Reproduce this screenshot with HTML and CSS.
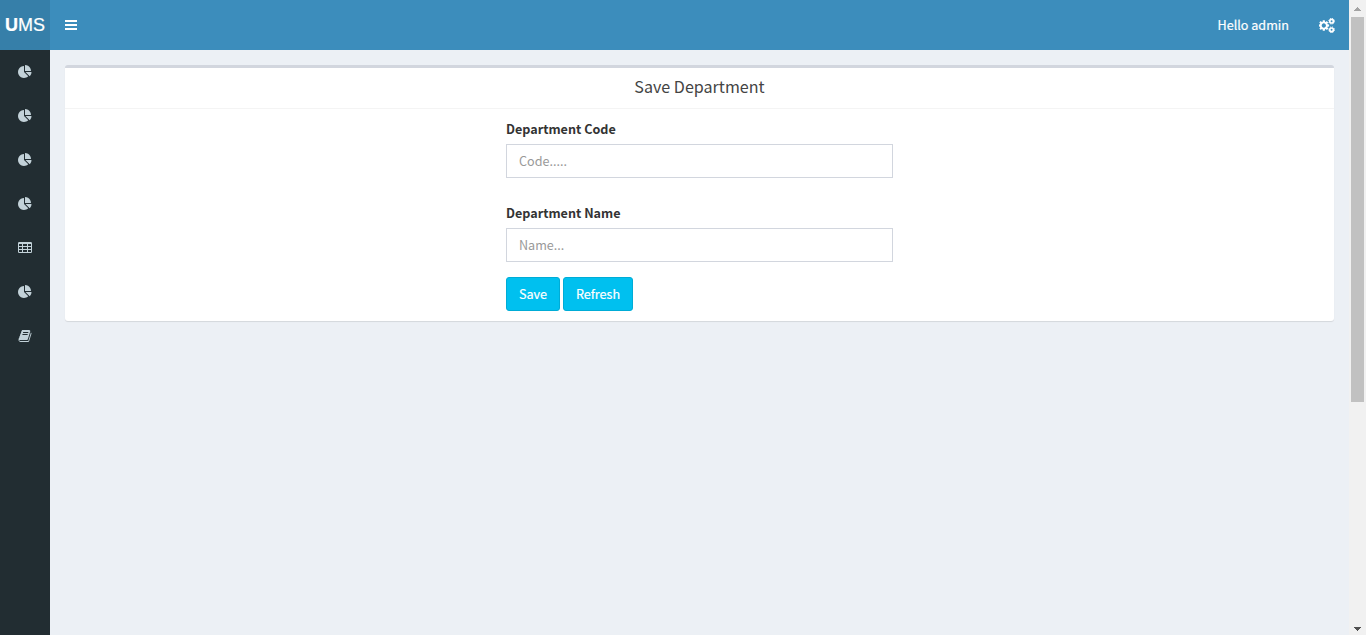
FILE: index.html
```html
<!DOCTYPE html>
<html lang="en">
<head>
<meta charset="utf-8">
<title>Save Department</title>
<link rel="stylesheet" href="styles.css">
</head>
<body>
<svg class="defs" aria-hidden="true">
  <symbol id="pie" viewBox="0 0 1792 1792"><path d="M768 890l546 546q-106 108-247.500 168t-298.500 60q-209 0-385.500-103t-279.500-279.500-103-385.500 103-385.500 279.500-279.500 385.500-103v762zM955 896h773q0 157-60 298.500t-168 247.500zM1664 768h-768v-768q209 0 385.500 103t279.500 279.500 103 385.500z"/></symbol>
  <symbol id="table" viewBox="0 0 14 14"><path fill-rule="evenodd" d="M1.200 1h11.600q1.200 0 1.200 1.200v8.600q0 1.200-1.200 1.200H1.200Q0 12 0 10.800v-8.600Q0 1 1.200 1zM1 3v2h3v-2zM5 3v2h4v-2zM10 3v2h3v-2zM1 6v2h3v-2zM5 6v2h4v-2zM10 6v2h3v-2zM1 9v2h3v-2zM5 9v2h4v-2zM10 9v2h3v-2z"/></symbol>
  <symbol id="book" viewBox="0 0 1792 1792"><path d="M1703 478q40 57 18 129l-275 906q-19 64-76.500 107.500t-122.500 43.500h-923q-77 0-148.500-53.500t-99.500-131.500q-24-67-2-127 0-4 3-27t4-37q1-8-3-21.500t-3-19.500q2-11 8-21t16.500-23.500 16.500-23.500q23-38 45-91.500t30-91.500q3-10 .5-30t-.5-28q3-11 17-28t17-23q21-36 42-92t25-90q1-9-2.500-32t.5-28q4-13 22-30.500t22-22.500q19-26 42.500-84.500t27.500-96.500q1-8-3-25.500t-2-26.500q2-8 9-18t18-23 17-21q8-12 16.500-30.500t15-35 16-36 19.500-32 26.500-23.500 36-11.500 47.500 5.500l-1 3q38-9 51-9h761q74 0 114 56t18 130l-274 906q-36 119-71.500 153.500t-128.500 34.500h-869q-27 0-38 15-11 16-1 43 24 70 144 70h923q29 0 56-15.500t35-41.500l300-987q7-22 5-57 38 15 59 43zm-1064 2q-4 13 2 22.500t20 9.500h608q13 0 25.500-9.500t16.500-22.500l21-64q4-13-2-22.500t-20-9.500h-608q-13 0-25.500 9.500t-16.500 22.500zm-83 256q-4 13 2 22.500t20 9.500h608q13 0 25.500-9.500t16.500-22.500l21-64q4-13-2-22.500t-20-9.500h-608q-13 0-25.500 9.500t-16.500 22.500z"/></symbol>
</svg>
<div class="app">
  <aside class="sidebar">
    <a class="logo"><b>U</b>MS</a>
    <nav class="menu">
      <a class="item"><svg class="icon"><use href="#pie"/></svg></a>
      <a class="item"><svg class="icon"><use href="#pie"/></svg></a>
      <a class="item"><svg class="icon"><use href="#pie"/></svg></a>
      <a class="item"><svg class="icon"><use href="#pie"/></svg></a>
      <a class="item"><svg class="icon"><use href="#table"/></svg></a>
      <a class="item"><svg class="icon"><use href="#pie"/></svg></a>
      <a class="item"><svg class="icon"><use href="#book"/></svg></a>
    </nav>
  </aside>
  <div class="main">
    <header class="navbar">
      <svg class="bars" viewBox="0 0 12 10"><path d="M0 0h12v2H0zM0 4h12v2H0zM0 8h12v2H0z"/></svg>
      <span class="hello">Hello admin</span>
      <svg class="cogs" viewBox="0 0 1920 1792"><path d="M832 896q0-106-75-181t-181-75-181 75-75 181 75 181 181 75 181-75 75-181zm384-91v185q0 10-7 19.500t-16 10.500l-155 24q-11 35-32 76 34 48 90 115 7 11 7 20 0 12-7 19-23 30-82.500 89.500t-78.500 59.500q-11 0-21-7l-115-90q-37 19-77 31-11 108-23 155-7 24-30 24h-186q-11 0-20-7.500t-10-17.500l-23-153q-34-10-75-31l-118 89q-7 7-20 7-11 0-21-8-144-133-144-160 0-9 7-19 10-14 41-53t47-61q-23-44-35-82l-152-24q-10-1-17-9.500t-7-19.500v-185q0-10 7-19.500t16-10.500l155-24q11-35 32-76-34-48-90-115-7-11-7-20 0-12 7-20 22-30 82-89t79-59q11 0 21 7l115 90q34-18 77-32 11-108 23-154 7-24 30-24h186q11 0 20 7.500t10 17.500l23 153q34 10 75 31l118-89q8-7 20-7 11 0 21 8 144 133 144 160 0 8-7 19-12 16-42 54t-45 60q23 48 34 82l152 23q10 2 17 10.500t7 19.500z"/><g class="small-cogs"><circle cx="1510" cy="384" r="215"/><circle cx="1510" cy="1408" r="215"/><g class="teeth"><circle cx="1510" cy="384" r="340"/><circle cx="1510" cy="1408" r="340"/></g></g></svg>
    </header>
    <main class="content">
      <section class="box">
        <h3 class="box-title">Save Department</h3>
        <form class="form">
          <label class="label" for="code">Department Code</label>
          <input class="input" id="code" type="text" placeholder="Code.....">
          <label class="label second" for="name">Department Name</label>
          <input class="input" id="name" type="text" placeholder="Name...">
          <div class="actions">
            <button class="btn save" type="button">Save</button>
            <button class="btn refresh" type="button">Refresh</button>
          </div>
        </form>
      </section>
    </main>
  </div>
  <div class="scrollbar">
    <svg class="arrow up" viewBox="0 0 7 4"><path d="M3 0h1v1h1v1h1v1h1v1H0V3h1V2h1V1h1z"/></svg>
    <div class="thumb"></div>
    <svg class="arrow down" viewBox="0 0 7 4"><path d="M0 0h7v1H6v1H5v1H4v1H3V3H2V2H1V1H0z"/></svg>
  </div>
</div>
</body>
</html>
```

FILE: styles.css
```css
* { box-sizing: border-box; }
body {
  margin: 0;
  overflow: hidden;
  color: #333;
  font: 12.6px/20px "Noto Sans CJK JP", "Noto Sans CJK SC", "Noto Sans", sans-serif;
}
.defs { display: none; }
.app { display: flex; height: 635px; }
.sidebar { width: 50px; background: #222d32; }
.logo {
  display: block;
  height: 50px;
  background: #367fa9;
  color: #fff;
  font: 18px/50px "Liberation Sans", Arial, sans-serif;
  text-align: center;
  -webkit-text-stroke: .2px #fff;
}
.menu { display: flex; flex-direction: column; }
.item {
  display: flex;
  height: 44px;
  align-items: center;
  justify-content: center;
}
.icon { width: 14px; height: 14px; fill: #c3d2d9; }
.main { display: flex; flex: 1; flex-direction: column; background: #ecf0f5; }
.navbar {
  display: flex;
  height: 50px;
  align-items: center;
  padding: 0 14px 0 15px;
  background: #3c8dbc;
  color: #fff;
}
.bars { width: 12px; height: 10px; fill: #fff; }
.hello {
  margin-left: auto;
  -webkit-text-stroke: .2px #fff;
}
.cogs { width: 16px; height: 15px; margin-left: 30px; fill: #fff; }
.small-cogs { fill: none; stroke: #fff; stroke-width: 200; }
.teeth { stroke-width: 120; stroke-dasharray: 150 117; }
.content { padding: 15px; }
.box {
  height: 256px;
  border-top: 3px solid #d2d6de;
  border-radius: 3px;
  background: #fff;
  box-shadow: 0 1px 1px rgba(0, 0, 0, .1);
}
.box-title {
  height: 41px;
  margin: 0;
  border-bottom: 1px solid #f4f4f4;
  color: #444;
  font-size: 16.1px;
  font-weight: 400;
  line-height: 36px;
  text-align: center;
}
.form { width: 387px; margin: 0 auto; padding-top: 10px; }
.label { display: block; margin-bottom: 5px; font-weight: 700; }
.second { margin-top: 25px; }
.input {
  display: block;
  width: 100%;
  height: 34px;
  padding: 5px 12px 7px;
  border: 1px solid #d2d6de;
  background: #fff;
  color: #555;
  font: inherit;
}
.input::placeholder { color: #999; opacity: 1; }
.actions { display: flex; gap: 3px; padding-top: 15px; }
.btn {
  height: 34px;
  padding: 0;
  border: 1px solid #00acd6;
  border-radius: 3px;
  background: #00c0ef;
  color: #fff;
  font: inherit;
  -webkit-text-stroke: .2px #fff;
}
.save { width: 54px; }
.refresh { width: 70px; }
.scrollbar {
  display: flex;
  width: 17px;
  flex-direction: column;
  align-items: center;
  padding: 7px 0 4px;
  background: #f1f1f1;
}
.arrow { width: 7px; height: 4px; }
.up { fill: #a3a3a3; }
.down { margin-top: auto; fill: #505050; }
.thumb { width: 13px; height: 385px; margin-top: 6px; background: #c1c1c1; }
```
